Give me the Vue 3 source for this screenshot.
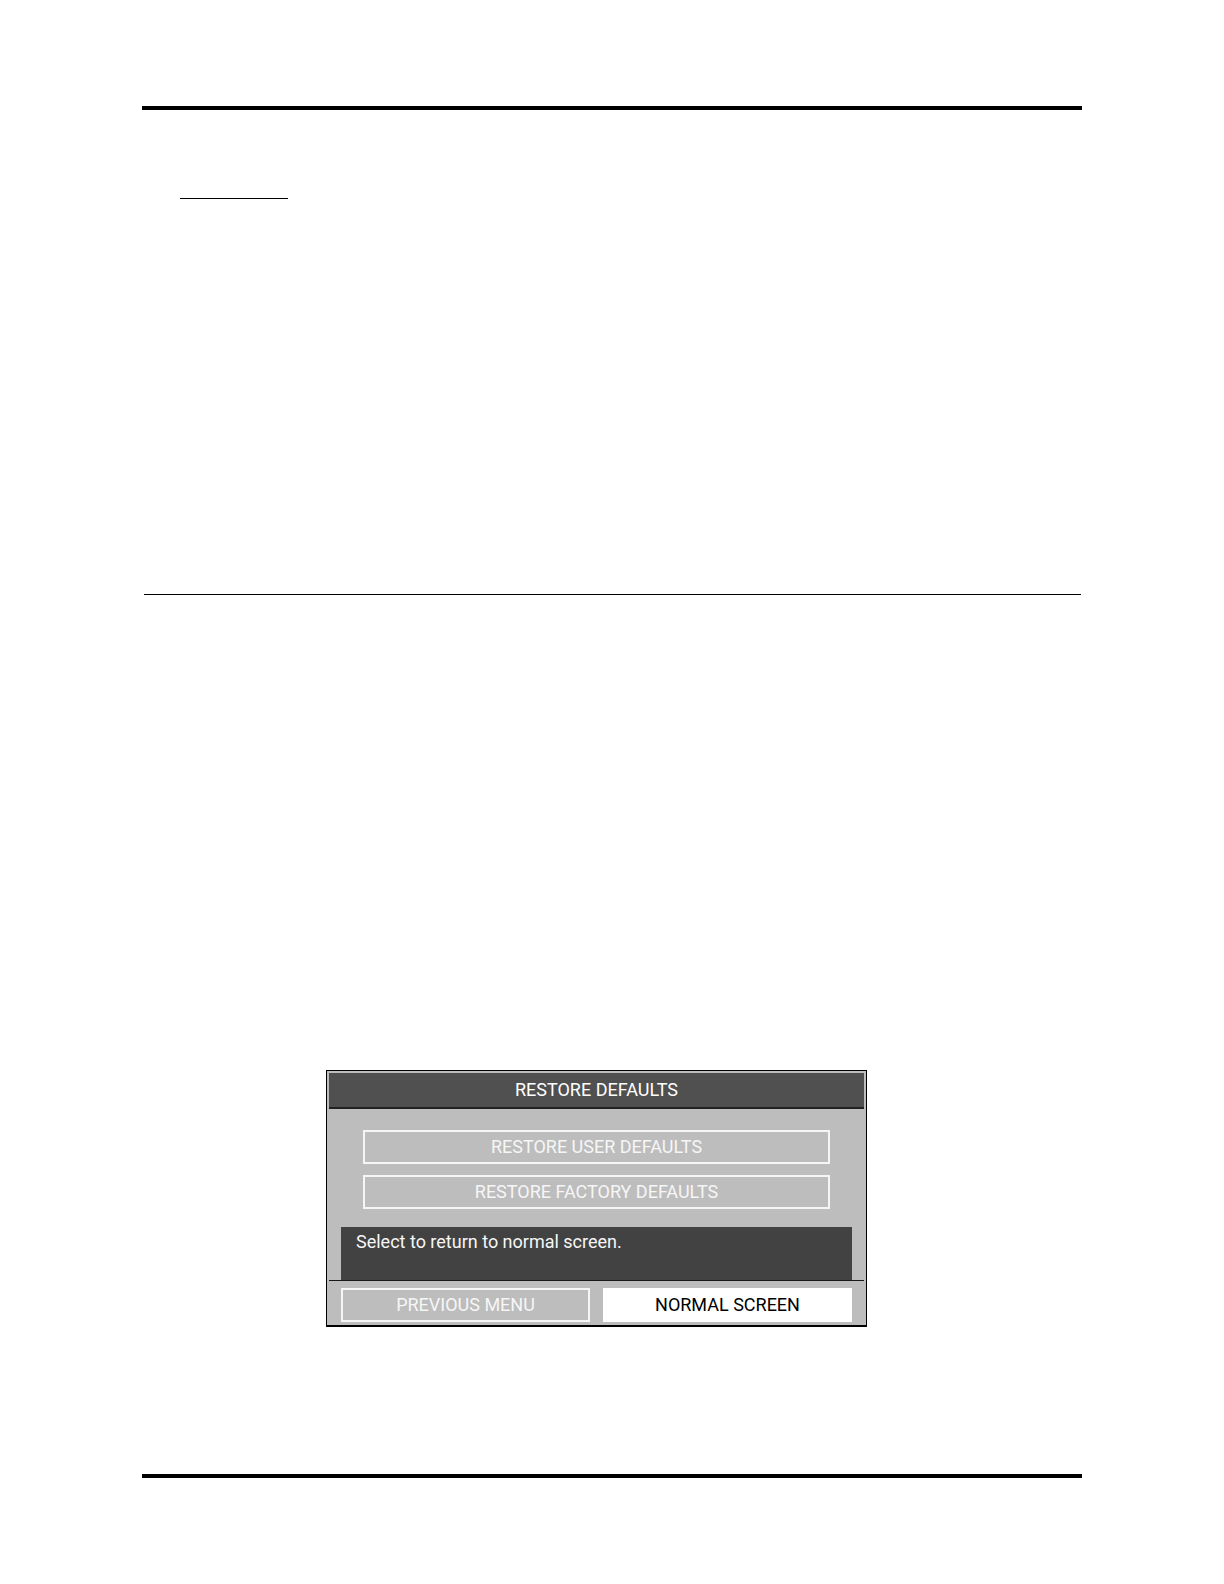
<script setup>
import { ref } from 'vue'

const title = 'RESTORE DEFAULTS'
const options = ['RESTORE USER DEFAULTS', 'RESTORE FACTORY DEFAULTS']
const actions = ['PREVIOUS MENU', 'NORMAL SCREEN']

const selected = ref('NORMAL SCREEN')
</script>

<template>
  <main class="page">
    <section class="intro">
      <hr class="short-rule" />
    </section>
    <section class="content">
      <div class="screen">
        <h1 class="screen-title">{{ title }}</h1>
        <div class="options">
          <button
            v-for="option in options"
            :key="option"
            type="button"
            class="menu-btn"
            :class="{ active: selected === option }"
            @click="selected = option"
          >
            {{ option }}
          </button>
        </div>
        <p class="message">Select to return to normal screen.</p>
        <div class="actions">
          <button
            v-for="action in actions"
            :key="action"
            type="button"
            class="menu-btn"
            :class="{ active: selected === action }"
            @click="selected = action"
          >
            {{ action }}
          </button>
        </div>
      </div>
    </section>
  </main>
</template>

<style>
body {
  margin: 0;
  background-color: #fff;
}
</style>

<style scoped>
.page {
  margin: 106px 142px;
  border-top: 4px solid #000;
  border-bottom: 4px solid #000;
}

.intro {
  padding: 88px 38px 395px;
}

.short-rule {
  width: 108px;
  height: 1px;
  margin: 0;
  border: none;
  background-color: #000;
}

.content {
  margin: 0 1px 0 2px;
  padding: 475px 0 147px 182px;
  border-top: 1px solid #000;
}

.screen {
  box-sizing: border-box;
  max-width: 541px;
  padding: 2px 1px 1px;
  border: 1px solid #000;
  border-bottom-width: 2px;
  background-color: #bdbdbd;
  font-family: Roboto, 'Liberation Sans', sans-serif;
  font-size: 18px;
  line-height: 24px;
}

.screen-title {
  margin: 0 1px;
  padding: 5px 0;
  border-bottom: 2px solid #222;
  background-color: #505050;
  color: #fff;
  font-size: 18px;
  font-weight: normal;
  text-align: center;
}

.options {
  display: flex;
  flex-direction: column;
  gap: 11px;
  padding: 21px 35px 18px;
}

.menu-btn {
  flex: 1;
  min-height: 34px;
  padding: 0;
  border: 2px solid #f6f6f6;
  background-color: transparent;
  color: #f6f6f6;
  font: inherit;
  cursor: pointer;
}

.menu-btn.active {
  border-color: #fff;
  background-color: #fff;
  color: #000;
}

.message {
  min-height: 50px;
  margin: 0 13px;
  padding: 3px 15px 0;
  background-color: #424242;
  color: #f6f6f6;
}

.actions {
  display: flex;
  gap: 13px;
  margin: 0 1px;
  padding: 7px 12px 2px;
  border-top: 1px solid #181818;
}
</style>
